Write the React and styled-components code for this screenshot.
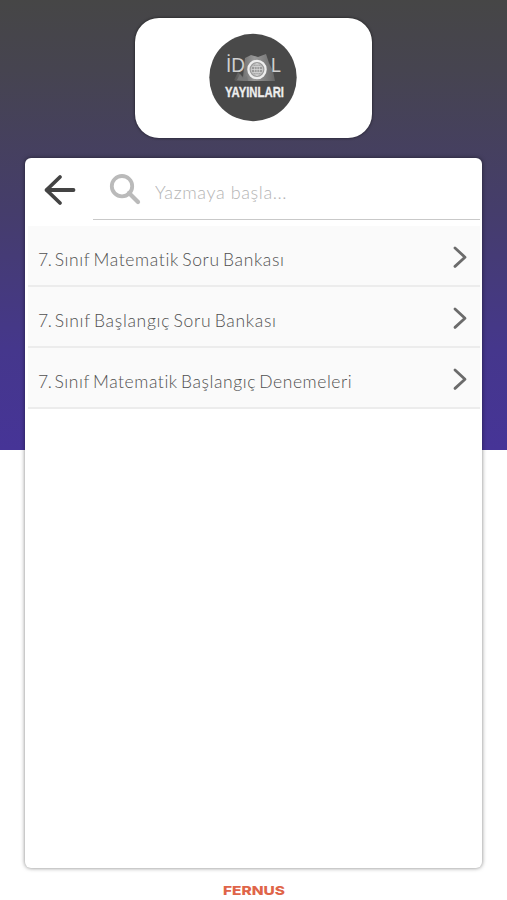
import React from "react";
import styled, { createGlobalStyle } from "styled-components";

const GlobalStyle = createGlobalStyle`
  * { box-sizing: border-box; }
  body { margin: 0; background: #fff; font-family: Lato, "Noto Sans", sans-serif; }
`;

const Screen = styled.main`
  height: 900px;
  display: flex;
  flex-direction: column;
  align-items: center;
  padding-top: 18px;
  overflow: hidden;
  background: linear-gradient(#464646 0, #464450 70px, #453d6b 210px, #45378c 350px, #463497 450px) top / 100% 450px no-repeat #fff;
`;

const LogoCard = styled.header`
  width: 237px;
  height: 120px;
  flex: none;
  display: flex;
  justify-content: center;
  padding: 15px 1px 0 0;
  border-radius: 24px;
  background: #fff;
  box-shadow: 0 0 3px rgba(0, 0, 0, 0.65);
`;

const Panel = styled.section`
  width: 457px;
  height: 710px;
  flex: none;
  margin-top: 20px;
  padding: 0 2px 0 3px;
  border-radius: 6px;
  background: #fff;
  box-shadow: 0 0 4px rgba(0, 0, 0, 0.5);
`;

const SearchBar = styled.div`
  height: 68px;
  display: flex;
`;

const BackButton = styled.button`
  width: 65px;
  height: 62px;
  padding: 16px 0 0 15px;
  border: 0;
  background: none;
  display: flex;
`;

const SearchField = styled.label`
  flex: 1;
  height: 62px;
  display: flex;
  padding: 16px 0 0 16px;
  border-bottom: 1px solid #c9c9c9;
`;

const SearchInput = styled.input`
  width: 250px;
  height: 30px;
  margin: 3px 0 0 14px;
  padding: 0;
  border: 0;
  outline: 0;
  background: none;
  font: 300 18px Lato, "Noto Sans", sans-serif;
  letter-spacing: 0.6px;
  &::placeholder { color: #b4b4b4; opacity: 1; }
`;

const BookList = styled.ul`
  margin: 0;
  padding: 0;
  list-style: none;
`;

const BookRow = styled.li`
  height: 61px;
  display: flex;
  align-items: center;
  justify-content: space-between;
  padding: 6px 12px 0 10px;
  border-bottom: 2px solid #ececec;
  background: #fafafa;
  color: #505050;
  font-size: 17.5px;
  font-weight: 300;
  svg { margin-top: -4px; }
`;

const BookTitle = styled.span`
  padding-top: 2px;
  letter-spacing: ${({ $tracking }) => $tracking}px;
  word-spacing: -2px;
  white-space: nowrap;
`;

const BookNumber = styled.span`
  letter-spacing: -0.5px;
`;

const Brand = styled.footer`
  margin-top: 14px;
  color: #df6549;
  line-height: 18px;
`;

const books = [
  { number: "7.", title: "Sınıf Matematik Soru Bankası", tracking: 0.63 },
  { number: "7.", title: "Sınıf Başlangıç Soru Bankası", tracking: 0.7 },
  { number: "7.", title: "Sınıf Matematik Başlangıç Denemeleri", tracking: 0.56 },
];

const IdolLogo = () => (
  <svg width="88" height="90" viewBox="0 0 88 90" aria-label="İdol Yayınları">
    <defs>
      <linearGradient id="haze" x2="1">
        <stop offset="0" stopColor="#555" />
        <stop offset=".5" stopColor="#999" />
        <stop offset="1" stopColor="#666" />
      </linearGradient>
    </defs>
    <circle cx="44" cy="44.5" r="43.7" fill="#494949" />
    <path d="M25 47 29 39 34 44 36 25 42 22 49 24 57 21 60 30 64 38 66 48H27Z" fill="url(#haze)" />
    <path d="m28 47 3-6 3 5 4-3 1 5Z" fill="#777" />
    <g fontFamily="Liberation Sans, sans-serif" fill="#eee">
      <text x="17" y="39" fontSize="21" fill="#d0d0d0" textLength="19" lengthAdjust="spacingAndGlyphs">İD</text>
      <text x="62" y="39" fontSize="21" fill="#d0d0d0" textLength="10" lengthAdjust="spacingAndGlyphs">L</text>
      <text x="16" y="64" fontSize="14" fontWeight="700" stroke="#eee" strokeWidth=".3" textLength="59" lengthAdjust="spacingAndGlyphs">YAYINLARI</text>
    </g>
    <circle cx="48" cy="36.5" r="8.6" fill="#999" stroke="#eee" strokeWidth="2.3" />
    <g fill="none" stroke="#ddd" strokeWidth=".7">
      <circle cx="48" cy="36.5" r="5.8" />
      <ellipse cx="48" cy="36.5" rx="2.5" ry="5.8" />
      <path d="M42.3 36.5h11.4M43.5 33.5h9M43.5 39.5h9M48 30.7v11.6" />
    </g>
  </svg>
);

const ArrowLeft = () => (
  <svg width="34" height="32" viewBox="0 0 34 32" fill="none" stroke="#444" strokeWidth="3.8" strokeLinecap="round" strokeLinejoin="round">
    <path d="M17 3 3.5 16 17 29M3.5 16h27" />
  </svg>
);

const SearchIcon = () => (
  <svg width="32" height="32" viewBox="0 0 32 32" fill="none" stroke="#bababa">
    <circle cx="13" cy="12.2" r="10.2" strokeWidth="3.8" />
    <path d="m20 19 9 9" strokeWidth="4.2" strokeLinecap="round" />
  </svg>
);

const ChevronRight = () => (
  <svg width="16" height="24" viewBox="0 0 16 24" fill="none" stroke="#6b6b6b" strokeWidth="2.8" strokeLinecap="round" strokeLinejoin="round">
    <path d="m3 3 10 9.2-10 9.2" />
  </svg>
);

const FernusLogo = () => (
  <svg width="64" height="14" viewBox="0 0 64 14">
    <text x="1" y="11.5" textLength="62" lengthAdjust="spacingAndGlyphs" fontFamily="Inter, sans-serif" fontSize="12.3" fontWeight="800" fill="#df6549">FERNUS</text>
  </svg>
);

export default function App() {
  return (
    <>
      <GlobalStyle />
      <Screen>
        <LogoCard><IdolLogo /></LogoCard>
        <Panel>
          <SearchBar>
            <BackButton aria-label="Geri"><ArrowLeft /></BackButton>
            <SearchField>
              <SearchIcon />
              <SearchInput placeholder="Yazmaya başla..." />
            </SearchField>
          </SearchBar>
          <BookList>
            {books.map(({ number, title, tracking }) => (
              <BookRow key={title}>
                <BookTitle $tracking={tracking}><BookNumber>{number}</BookNumber> {title}</BookTitle>
                <ChevronRight />
              </BookRow>
            ))}
          </BookList>
        </Panel>
        <Brand><FernusLogo /></Brand>
      </Screen>
    </>
  );
}
